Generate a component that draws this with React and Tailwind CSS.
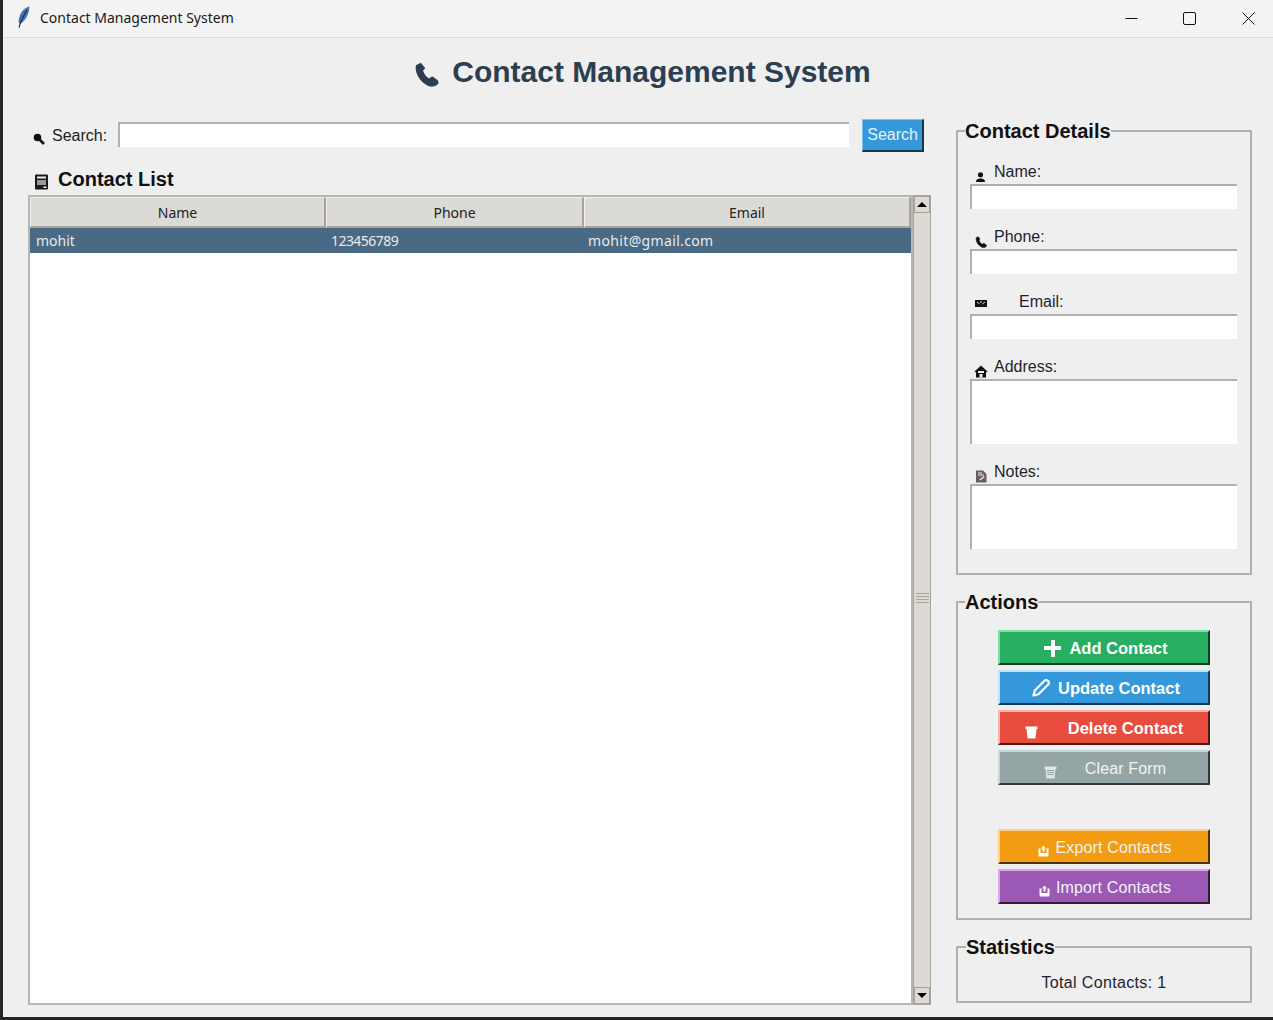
const sans = "font-['Liberation_Sans',Arial,sans-serif]"
const ui = "font-['Noto_Sans',sans-serif]"

function PhoneIcon({ className }) {
  return (
    <svg viewBox="0 0 24 24" className={className} fill="currentColor" stroke="currentColor" strokeWidth="1.2" strokeLinejoin="round">
      <path d="M6.5 1.5 L2.5 3.5 C1 9 5 18 14 22.5 C17 23.5 20.5 23 23 20.5 L22.5 18 L17.5 14.5 L14.5 16.5 C11.5 15 9 11.5 8 8 L10 6 Z" />
    </svg>
  )
}

function UserIcon({ className }) {
  return (
    <svg viewBox="0 0 12 12" className={className} fill="currentColor">
      <circle cx="6" cy="3.5" r="2.8" />
      <path d="M1 11.5 C1 8.5 3.5 7.5 6 7.5 C8.5 7.5 11 8.5 11 11.5 Z" />
    </svg>
  )
}

function MailIcon({ className }) {
  return (
    <svg viewBox="0 0 12 7" className={className}>
      <rect width="12" height="7" fill="currentColor" />
      <path d="M2 2 L4.5 4 M10 2 L7.5 4 M5 2 H7" stroke="#efefef" fill="none" />
    </svg>
  )
}

function HouseIcon({ className }) {
  return (
    <svg viewBox="0 0 14 13" className={className}>
      <path d="M7 0.5 L13.5 6.5 L12 7.5 L12 12.5 L2 12.5 L2 7.5 L0.5 6.5 Z" fill="currentColor" />
      <path d="M4 6 H10 V8 H4 Z" fill="#efefef" />
      <path d="M5.5 9 H8.5 V12.5 H5.5 Z" fill="#efefef" />
    </svg>
  )
}

function NoteIcon({ className }) {
  return (
    <svg viewBox="0 0 12 13" className={className}>
      <path d="M1 0.5 H8 L11.5 4 V12.5 H1 Z" fill="#6a5f5c" />
      <path d="M3 3 H7 M3 5 H9" stroke="#efefef" />
      <path d="M5 10 L9 6.5" stroke="#efefef" strokeWidth="1.5" />
    </svg>
  )
}

function SearchIcon({ className }) {
  return (
    <svg viewBox="0 0 12 12" className={className}>
      <circle cx="4.5" cy="4.5" r="3.8" fill="currentColor" />
      <path d="M6 6 L11 11" stroke="currentColor" strokeWidth="2.6" />
    </svg>
  )
}

function BookIcon({ className }) {
  return (
    <svg viewBox="0 0 14 16" className={className}>
      <rect x="0.5" y="0.5" width="13" height="15" rx="1" fill="#1a1a1a" />
      <rect x="2.5" y="2.5" width="9" height="2" fill="#efefef" />
      <rect x="2.5" y="6" width="9" height="5" fill="#9a9a9a" />
      <rect x="9" y="12.5" width="3" height="1.5" fill="#efefef" />
    </svg>
  )
}

function PencilIcon({ className }) {
  return (
    <svg viewBox="0 0 18 18" className={className} fill="none" stroke="currentColor" strokeWidth="2.2" strokeLinejoin="round">
      <path d="M1.5 16.5 L2.8 11.5 L12.5 1.8 C13.5 1 15 1 16 2 C17 3 17 4.5 16.2 5.5 L6.5 15.2 Z" />
    </svg>
  )
}

function CupIcon({ className }) {
  return (
    <svg viewBox="0 0 13 13" className={className} fill="currentColor">
      <path d="M0.5 0.5 H12.5 V3 H11.5 L10.5 12.5 H2.5 L1.5 3 H0.5 Z" />
    </svg>
  )
}

function BinIcon({ className }) {
  return (
    <svg viewBox="0 0 13 13" className={className}>
      <path d="M0.5 0.5 H12.5 V3 H11.5 L10.5 12.5 H2.5 L1.5 3 H0.5 Z" fill="#dfe4e4" />
      <path d="M3 4.5 H10 M3 6.5 H10 M3.5 8.5 H9.5" stroke="#95a5a6" />
    </svg>
  )
}

function TrayIcon({ className }) {
  return (
    <svg viewBox="0 0 11 12" className={className} fill="currentColor">
      <path d="M5.5 0.5 L8 3.5 H6.5 V6.5 H4.5 V3.5 H3 Z" />
      <path d="M0.5 3.5 H2.5 V8 H8.5 V3.5 H10.5 V10 C10.5 11 10 11.5 9 11.5 H2 C1 11.5 0.5 11 0.5 10 Z" />
    </svg>
  )
}

function Feather({ className }) {
  return (
    <svg viewBox="0 0 14 22" className={className}>
      <path d="M12.5 0.5 C6 2 2 8 1.5 16 L3 18 C8 15 12 9 12.5 0.5 Z" fill="#3f74b8" />
      <path d="M10 4 C7 9 4 14 2 21.5" stroke="#1c2c44" strokeWidth="1.2" fill="none" />
    </svg>
  )
}

function Field({ icon, label, labelClass = 'ml-[3px]', tall, mb = 'mb-[18px]' }) {
  return (
    <div className={mb}>
      <div className="flex h-[20px] items-center">
        <span className="mb-[-1px] flex h-[20px] w-[21px] items-end justify-center text-[#111]">{icon}</span>
        <span className={`text-[16px] leading-[20px] text-[#1f1f2e] ${labelClass}`}>{label}</span>
      </div>
      <div className={`mt-[2px] ${tall ? 'h-[65px]' : 'h-[25px]'} border-t-2 border-l-2 border-t-[#b0b0b0] border-l-[#b0b0b0] bg-white`} />
    </div>
  )
}

function ActionButton({ color, light, dark, icon, label, bold, gap, className = '' }) {
  return (
    <button
      className={`flex h-[35px] w-[212px] items-center justify-center border-2 pt-[1px] text-white ${className}`}
      style={{ backgroundColor: color, borderTopColor: light, borderLeftColor: light, borderRightColor: dark, borderBottomColor: dark }}
    >
      {icon}
      <span className={`${bold ? 'text-[16.5px] font-bold' : 'translate-y-[1px] text-[16px] tracking-[0.15px] text-[#f1f3f3]'} leading-[20px]`} style={{ marginLeft: gap }}>
        {label}
      </span>
    </button>
  )
}

function ScrollArrow({ up }) {
  return (
    <div className="flex h-[17px] items-center justify-center border border-[#a8a49c] bg-[#dcdad5]">
      <div
        className={`h-0 w-0 border-x-[5px] border-x-transparent ${up ? 'border-b-[5px] border-b-black' : 'border-t-[5px] border-t-black'}`}
      />
    </div>
  )
}

export default function App() {
  return (
    <div className={`flex h-[1020px] w-[1273px] flex-col overflow-hidden bg-[#252525] pb-[3px] pl-[3px] ${sans}`}>
      {/* title bar */}
      <div className="flex h-[38px] shrink-0 items-center border-b border-[#dcdcdc] bg-[#f3f3f3]">
        <Feather className="ml-[14px] h-[22px] w-[14px] -translate-y-[2px]" />
        <span className={`ml-[9px] -translate-y-[1px] text-[14px] text-[#1a1a1a] ${ui}`}>Contact Management System</span>
        <div className="ml-auto flex items-center text-[#111]">
          <div className="flex w-[58px] justify-center">
            <svg viewBox="0 0 13 13" className="h-[13px] w-[13px]" stroke="currentColor">
              <path d="M0.5 6.5 H12.5" />
            </svg>
          </div>
          <div className="flex w-[58px] justify-center">
            <svg viewBox="0 0 13 13" className="h-[13px] w-[13px]" fill="none" stroke="currentColor">
              <rect x="0.5" y="0.5" width="12" height="12" rx="1.5" />
            </svg>
          </div>
          <div className="flex w-[55px] pl-[24px]">
            <svg viewBox="0 0 13 13" className="h-[13px] w-[13px]" stroke="currentColor">
              <path d="M0.5 0.5 L12.5 12.5 M12.5 0.5 L0.5 12.5" />
            </svg>
          </div>
        </div>
      </div>

      <div className="flex min-h-0 flex-1 flex-col bg-[#efefef]">
        {/* heading */}
        <div className="flex h-[67px] shrink-0 items-center justify-center pl-[9px] text-[#2c3e50]">
          <PhoneIcon className="mr-[13px] mt-[6px] h-[25px] w-[25px]" />
          <h1 className="text-[30px] font-bold leading-[36px]">Contact Management System</h1>
        </div>

        <div className="flex min-h-0 flex-1 pl-[25px]">
          {/* left column */}
          <div className="flex w-[903px] flex-col pt-[14px]">
            <div className="flex h-[32px] items-center pl-[5px]">
              <SearchIcon className="mt-[7px] h-[12px] w-[12px] text-[#111]" />
              <span className="ml-[7px] pt-[2px] text-[16px] text-[#222]">Search:</span>
              <div className="ml-[11px] mb-[2px] h-[25px] w-[731px] border-t-2 border-l-2 border-t-[#b0b0b0] border-l-[#b0b0b0] bg-white" />
              <button className="ml-[13px] h-[33px] w-[62px] border-t border-l border-r-2 border-b-2 border-t-[#7cc0ee] border-l-[#7cc0ee] border-r-[#17374d] border-b-[#17374d] bg-[#3498db] text-[16px] text-[#e6f3fb]">
                Search
              </button>
            </div>
            <div className="mt-[15px] flex h-[26px] items-center pl-[6px]">
              <BookIcon className="mt-[5px] h-[16px] w-[15px]" />
              <span className="ml-[9px] text-[20px] font-bold leading-[24px] text-[#111]">Contact List</span>
            </div>
            <div className="mt-[3px] mb-[12px] flex min-h-0 flex-1">
              <div className={`flex flex-1 flex-col border-2 border-[#b9b6ae] bg-white ${ui}`}>
                <div className="grid h-[31px] shrink-0 grid-cols-[296px_258px_327px] text-[14px] text-[#222]">
                  {['Name', 'Phone', 'Email'].map((h) => (
                    <div
                      key={h}
                      className="flex items-center justify-center border-t border-l border-r-2 border-b-2 border-t-[#f2f1ee] border-l-[#f2f1ee] border-r-[#a8a49c] border-b-[#a8a49c] bg-[#dcdad5]"
                    >
                      {h}
                    </div>
                  ))}
                </div>
                <div className="grid h-[25px] shrink-0 grid-cols-[296px_258px_327px] items-center bg-[#4a6984] text-[14px] text-[#e6ebef]">
                  <span className="pl-[6px]">mohit</span>
                  <span className="pl-[5px] tracking-[-0.55px]">123456789</span>
                  <span className="pl-[4px] tracking-[0.35px]">mohit@gmail.com</span>
                </div>
              </div>
              {/* scrollbar */}
              <div className="flex w-[18px] flex-col border border-[#a8a49c] bg-[#dcdad5]">
                <ScrollArrow up />
                <div className="mb-[4px] flex flex-1 flex-col items-center justify-center gap-[2px]">
                  {[0, 1, 2, 3].map((i) => (
                    <div key={i} className="h-px w-[13px] bg-[#a8a49c]" />
                  ))}
                </div>
                <ScrollArrow />
              </div>
            </div>
          </div>

          {/* right column */}
          <div className="ml-[25px] flex w-[296px] flex-col pt-[14px]">
            <fieldset className="h-[456px] border-2 border-[#b0b0b0]">
              <legend className="ml-[7px] text-[20px] font-bold leading-[24px] text-[#111]">Contact Details</legend>
              <div className="pl-[12px] pr-[13px] pt-[19px]">
                <Field icon={<UserIcon className="h-[12px] w-[11px]" />} label="Name:" />
                <Field icon={<PhoneIcon className="h-[12px] w-[12px]" />} label="Phone:" />
                <Field icon={<MailIcon className="mb-[6px] h-[7px] w-[12px]" />} label="Email:" labelClass="ml-[28px]" />
                <Field icon={<HouseIcon className="h-[13px] w-[14px]" />} label="Address:" tall />
                <Field icon={<NoteIcon className="h-[13px] w-[12px]" />} label="Notes:" tall mb="mb-0" />
              </div>
            </fieldset>

            <fieldset className="mt-[15px] h-[330px] border-2 border-[#b0b0b0]">
              <legend className="ml-[7px] text-[20px] font-bold leading-[24px] text-[#111]">Actions</legend>
              <div className="flex flex-col gap-[5px] pl-[40px] pt-[16px]">
                <ActionButton className="pl-[4px]" color="#27ae60" light="#7fe0a6" dark="#123d25" bold gap="8px" label="Add Contact" icon={<span className="h-[17px] w-[17px] bg-[linear-gradient(#fff,#fff),linear-gradient(#fff,#fff)] bg-[length:100%_4px,4px_100%] bg-center bg-no-repeat" />} />
                <ActionButton className="pl-[4px]" color="#3498db" light="#c4e2f6" dark="#14384f" bold gap="8px" label="Update Contact" icon={<PencilIcon className="h-[18px] w-[18px]" />} />
                <ActionButton color="#e74c3c" light="#f6b5ad" dark="#4a1a15" bold gap="30px" label="Delete Contact" icon={<CupIcon className="mt-[8px] h-[13px] w-[13px]" />} />
                <ActionButton className="pl-[2px]" color="#95a5a6" light="#c5d6d6" dark="#2f3839" gap="28px" label="Clear Form" icon={<BinIcon className="mt-[8px] h-[13px] w-[13px]" />} />
                <ActionButton className="mt-[39px] pl-[2px]" color="#f39c12" light="#fad08a" dark="#4f3206" gap="6px" label="Export Contacts" icon={<TrayIcon className="mt-[7px] h-[12px] w-[11px]" />} />
                <ActionButton className="pl-[2px]" color="#9b59b6" light="#d6a9ea" dark="#2f1a38" gap="6px" label="Import Contacts" icon={<TrayIcon className="mt-[7px] h-[12px] w-[11px]" />} />
              </div>
            </fieldset>

            <fieldset className="mt-[15px] h-[68px] border-2 border-[#b0b0b0]">
              <legend className="ml-[8px] text-[20px] font-bold leading-[24px] text-[#111]">Statistics</legend>
              <div className="pt-[14px] text-center text-[16px] leading-[20px] tracking-[0.35px] text-[#1f1f2e]">Total Contacts: 1</div>
            </fieldset>
          </div>
        </div>
      </div>
    </div>
  )
}
